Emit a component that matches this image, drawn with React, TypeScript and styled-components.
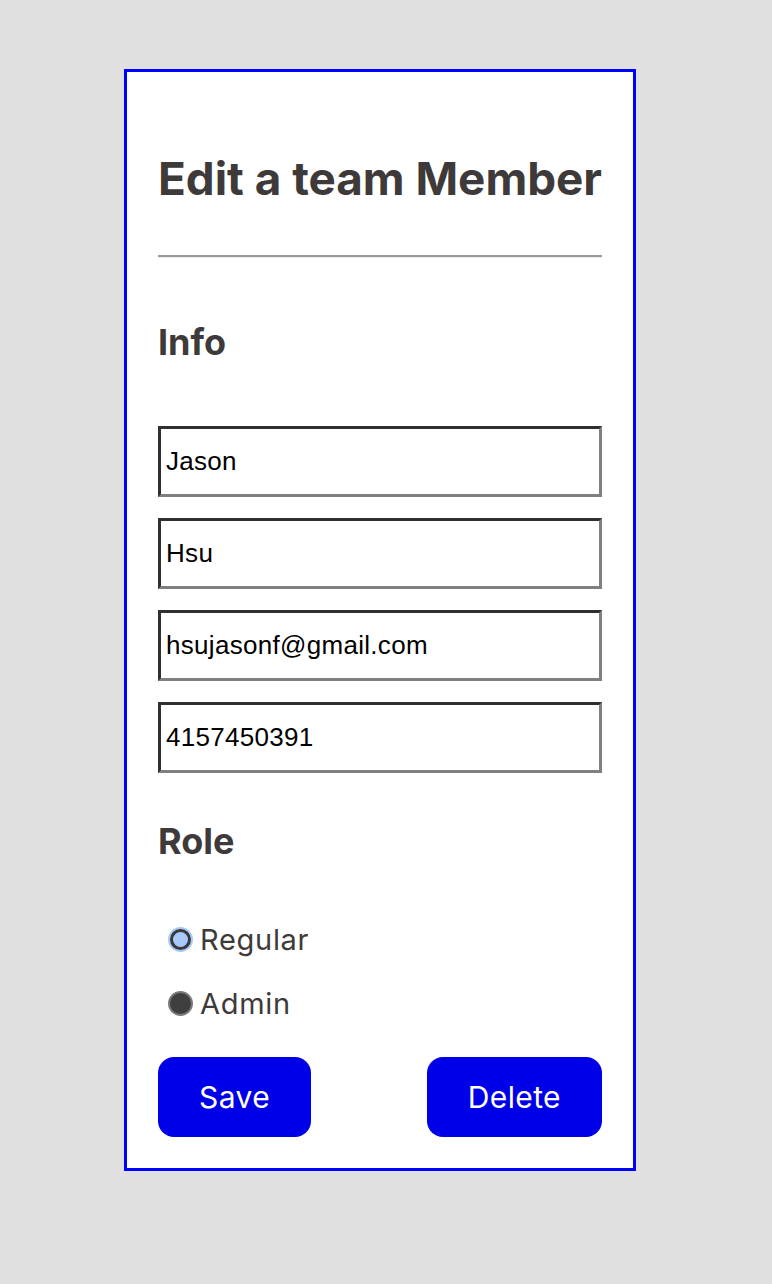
import React from "react";
import styled, { createGlobalStyle } from "styled-components";

const Global = createGlobalStyle`
  html, body { margin: 0; padding: 0; background: #e0e0e0; }
  body { font-family: Inter, "Noto Sans", sans-serif; }
`;

const Page = styled.div`
  min-height: 1284px;
  box-sizing: border-box;
  padding: 69px 0 0 124px;
`;

const Card = styled.form`
  width: 512px;
  box-sizing: border-box;
  border: 3px solid #0000ff;
  background: #ffffff;
  padding: 72px 31px 31px 31px;
  display: flex;
  flex-direction: column;
`;

const Title = styled.h1`
  margin: 0;
  font-family: Inter, sans-serif;
  font-weight: 700;
  font-size: 45.8px;
  line-height: 70px;
  color: #3e3a39;
  white-space: nowrap;
`;

const Rule = styled.hr`
  margin: 41px 0 0 0;
  height: 0;
  border: none;
  border-top: 2px solid #9a9a9a;
  border-bottom: 1px solid #ececec;
`;

const Section = styled.h2<{ $top: number }>`
  margin: ${(p) => p.$top}px 0 0 0;
  font-family: Inter, sans-serif;
  font-weight: 700;
  font-size: 36px;
  line-height: 40px;
  color: #3e3a39;
`;

const Fields = styled.div`
  display: flex;
  flex-direction: column;
  gap: 21px;
  margin-top: 64px;
`;

const Field = styled.input`
  box-sizing: border-box;
  width: 100%;
  height: 71px;
  margin: 0;
  padding: 0 5px;
  border-style: solid;
  border-width: 3px;
  border-color: #303030 #808080 #808080 #303030;
  background: #fff;
  font-family: "Liberation Sans", Arial, sans-serif;
  font-size: 26px;
  letter-spacing: 0.3px;
  color: #000;
  outline: none;
`;

const Options = styled.div`
  display: flex;
  flex-direction: column;
  gap: 22px;
  margin-top: 57px;
  padding-left: 10px;
`;

const Option = styled.label`
  display: flex;
  align-items: center;
  gap: 7px;
  height: 42px;
  font-family: Inter, sans-serif;
  font-size: 29px;
  letter-spacing: 0.7px;
  color: #3e3a39;
`;

const Dot = styled.span<{ $active: boolean }>`
  display: inline-block;
  box-sizing: border-box;
  width: ${(p) => (p.$active ? "21px" : "25px")};
  height: ${(p) => (p.$active ? "21px" : "25px")};
  margin: ${(p) => (p.$active ? "0 2px" : "0")};
  border-radius: 50%;
  background: ${(p) => (p.$active ? "#a9c9fb" : "#3f3f3f")};
  border: ${(p) => (p.$active ? "3px solid #3a3a3a" : "2px solid #7a7a7a")};
  box-shadow: ${(p) => (p.$active ? "0 0 0 2px #a9c9fb" : "none")};
`;

const Actions = styled.div`
  display: flex;
  justify-content: space-between;
  margin-top: 33px;
`;

const Button = styled.button`
  height: 80px;
  padding: 0 41px;
  border: none;
  border-radius: 16px;
  background: #0000e8;
  color: #ffffff;
  font-family: Inter, sans-serif;
  font-size: 30px;
  letter-spacing: 0.4px;
  cursor: pointer;
`;

export default function App() {
  return (
    <>
      <Global />
      <Page>
        <Card onSubmit={(e) => e.preventDefault()}>
          <Title>Edit a team Member</Title>
          <Rule />
          <Section $top={64}>Info</Section>
          <Fields>
            <Field defaultValue="Jason" />
            <Field defaultValue="Hsu" />
            <Field defaultValue="hsujasonf@gmail.com" />
            <Field defaultValue="4157450391" />
          </Fields>
          <Section $top={48}>Role</Section>
          <Options>
            <Option>
              <Dot $active={true} />
              Regular
            </Option>
            <Option>
              <Dot $active={false} />
              Admin
            </Option>
          </Options>
          <Actions>
            <Button type="button">Save</Button>
            <Button type="button">Delete</Button>
          </Actions>
        </Card>
      </Page>
    </>
  );
}
